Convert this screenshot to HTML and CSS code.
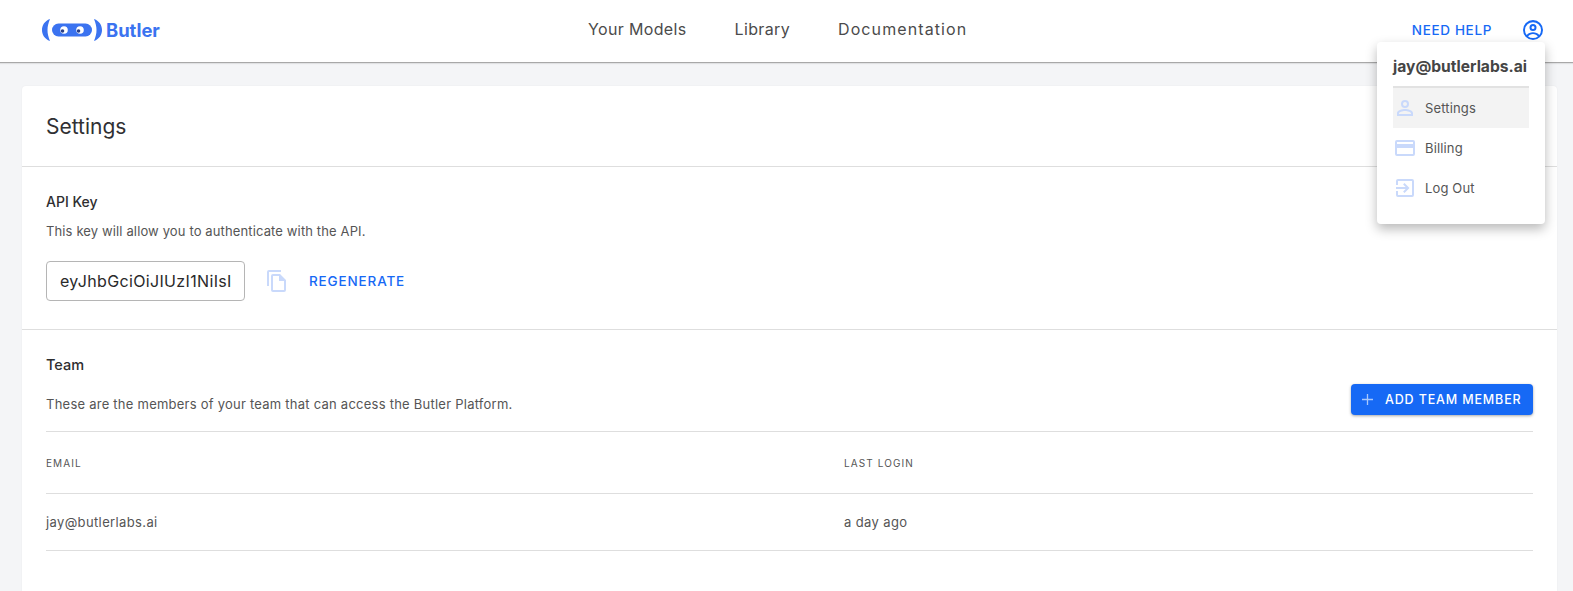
FILE: index.html
```html
<!DOCTYPE html>
<html lang="en">
<head>
<meta charset="utf-8">
<title>Butler - Settings</title>
<link rel="stylesheet" href="styles.css">
</head>
<body>
<header class="nav">
  <a class="logo">
    <svg class="logo-mark" width="60" height="22" viewBox="0 0 60 22">
      <path d="M8 0C2.500 2 0 6.500 0 11s2.500 9 8 11C6.300 18 5.500 14.500 5.500 11S6.300 4 8 0Z" fill="#3b73f0"/>
      <path d="M52 0c5.500 2 8 6.500 8 11s-2.500 9-8 11c1.700-4 2.500-7.500 2.500-11S53.700 4 52 0Z" fill="#3b73f0"/>
      <rect x="10" y="4.500" width="40" height="13" rx="6.500" fill="#3b73f0"/>
      <circle cx="22" cy="11" r="3.800" fill="#fff"/>
      <circle cx="38" cy="11" r="3.800" fill="#fff"/>
      <circle cx="20.500" cy="12" r="1.800" fill="#2a3f86"/>
      <circle cx="36.500" cy="12" r="1.800" fill="#2a3f86"/>
    </svg>
    <span class="logo-text">Butler</span>
  </a>
  <nav class="nav-links">
    <a>Your Models</a>
    <a>Library</a>
    <a class="doc-link">Documentation</a>
  </nav>
  <div class="nav-right">
    <a class="need-help">NEED HELP</a>
    <svg class="account" width="24" height="24" viewBox="0 0 24 24" fill="#1669f5">
      <path d="M12 2a10 10 0 1 0 0 20 10 10 0 0 0 0-20ZM7.100 18.500c.9-1.400 2.900-2.400 4.900-2.400s4 1 4.900 2.400A8 8 0 0 1 12 20a8 8 0 0 1-4.900-1.500Zm11.200-1.400C16.900 15.300 14.400 14.300 12 14.300s-4.900 1-6.300 2.800a8 8 0 1 1 12.600 0ZM12 6a3.500 3.500 0 1 0 0 7 3.500 3.500 0 0 0 0-7Zm0 5a1.500 1.500 0 1 1 0-3 1.500 1.500 0 0 1 0 3Z"/>
    </svg>
  </div>
</header>

<main class="page">
  <section class="card">
    <h1 class="card-title">Settings</h1>

    <div class="section api">
      <h2 class="section-title">API Key</h2>
      <p class="desc">This key will allow you to authenticate with the API.</p>
      <div class="key-row">
        <div class="key-box"><span class="key-text">eyJhbGciOiJIUzI1NiIsI</span></div>
        <svg class="copy" width="24" height="24" viewBox="0 0 24 24" fill="#c9d9fb">
          <path d="M16 1H4a2 2 0 0 0-2 2v14h2V3h12V1Zm-1 4H8a2 2 0 0 0-2 2v14a2 2 0 0 0 2 2h11a2 2 0 0 0 2-2V11l-6-6Zm-7 16V7h6v5h5v9H8Z"/>
        </svg>
        <a class="regen">REGENERATE</a>
      </div>
    </div>

    <div class="section team">
      <h2 class="section-title">Team</h2>
      <div class="team-bar">
        <p class="desc">These are the members of your team that can access the Butler Platform.</p>
        <button class="add-btn">
          <svg class="plus" width="11" height="11" viewBox="0 0 11 11" stroke="#a9c8fb" stroke-width="1.300" fill="none"><path d="M5.500 0v11M0 5.500h11"/></svg>
          ADD TEAM MEMBER
        </button>
      </div>
      <table class="members">
        <thead>
          <tr><th class="col-email">EMAIL</th><th>LAST LOGIN</th></tr>
        </thead>
        <tbody>
          <tr><td>jay@butlerlabs.ai</td><td>a day ago</td></tr>
        </tbody>
      </table>
    </div>
  </section>
</main>

<div class="menu">
  <div class="menu-head">jay@butlerlabs.ai</div>
  <a class="menu-item active">
    <svg class="menu-icon" width="24" height="24" viewBox="0 0 24 24" fill="#c9d9fb">
      <path d="M12 4a4 4 0 1 0 0 8 4 4 0 0 0 0-8Zm0 6a2 2 0 1 1 0-4 2 2 0 0 1 0 4Zm0 3c-2.700 0-8 1.300-8 4v3h16v-3c0-2.700-5.300-4-8-4Zm6 5H6v-1c.2-.7 3.300-2 6-2s5.800 1.300 6 2v1Z"/>
    </svg>
    <span>Settings</span>
  </a>
  <a class="menu-item">
    <svg class="menu-icon" width="24" height="24" viewBox="0 0 24 24" fill="#c9d9fb">
      <path d="M20 4H4a2 2 0 0 0-2 2v12a2 2 0 0 0 2 2h16a2 2 0 0 0 2-2V6a2 2 0 0 0-2-2Zm0 14H4v-6h16v6Zm0-10H4V6h16v2Z"/>
    </svg>
    <span>Billing</span>
  </a>
  <a class="menu-item">
    <svg class="menu-icon" width="24" height="24" viewBox="0 0 24 24" fill="#c9d9fb">
      <path d="M10.100 15.600 11.500 17l5-5-5-5-1.400 1.400 2.600 2.600H3v2h9.700l-2.600 2.600ZM19 3H5a2 2 0 0 0-2 2v4h2V5h14v14H5v-4H3v4a2 2 0 0 0 2 2h14a2 2 0 0 0 2-2V5a2 2 0 0 0-2-2Z"/>
    </svg>
    <span>Log Out</span>
  </a>
</div>
</body>
</html>
```

FILE: styles.css
```css
* { box-sizing: border-box; }
html, body { margin: 0; height: 100%; overflow: hidden; }
body {
  background: #f4f5f7;
  color: #3f3f46;
  font-family: "Inter", "Liberation Sans", sans-serif;
  position: relative;
}
.nav {
  height: 63px;
  background: #fff;
  border-bottom: 1px solid #a8a8a8;
  box-shadow: 0 1px 1px rgba(0,0,0,.08);
  display: flex;
  align-items: center;
  position: relative;
  padding: 0 28px 2px 42px;
}
.logo { display: flex; align-items: center; gap: 4px; }
.logo-text {
  font-weight: 700;
  font-size: 18.400px;
  color: #3b73f0;
}
.nav-links {
  position: absolute;
  left: 588px;
  top: 0;
  height: 58px;
  display: flex;
  align-items: center;
  gap: 48px;
}
.nav-links a { font-size: 16px; letter-spacing: 0.35px; color: #4b4b4b; }
.nav-links .doc-link { letter-spacing: 1.100px; }
.nav-right { margin-left: auto; display: flex; align-items: center; gap: 29px; }
.need-help { color: #1669f5; font-size: 13.500px; font-weight: 500; letter-spacing: .65px; }
.page { padding: 23px 16px 0 22px; }
.card {
  background: #fff;
  border-radius: 4px;
  height: 520px;
  box-shadow: 0 0 2px rgba(0,0,0,.06);
}
.card-title {
  margin: 0;
  height: 81px;
  padding: 0 24px;
  display: flex;
  align-items: center;
  font-size: 21px;
  font-weight: 400;
  color: #303033;
  border-bottom: 1px solid #dedede;
}
.section { padding: 0 24px; }
.api { height: 163px; padding-top: 26px; border-bottom: 1px solid #dedede; }
.section-title { margin: 0; font-size: 14px; font-weight: 500; line-height: 18px; color: #2e2e30; }
.team .section-title { font-size: 14.500px; }
.desc { margin: 0; font-size: 13px; line-height: 18px; color: #555; }
.api .desc { margin-top: 11px; letter-spacing: .13px; }
.team .desc { letter-spacing: .24px; padding-top: 9px; }
.key-row { display: flex; align-items: center; margin-top: 21px; }
.key-box {
  width: 199px;
  height: 40px;
  border: 1px solid #b5b5b5;
  border-radius: 4px;
  padding: 0 12px 0 13px;
  display: flex;
  align-items: center;
  overflow: hidden;
  font-size: 16px;
  letter-spacing: .35px;
  color: #2a2a2a;
}
.key-text { white-space: nowrap; overflow: hidden; }
.copy { margin-left: 20px; }
.regen { margin-left: 20px; color: #1669f5; font-size: 13.500px; font-weight: 500; letter-spacing: .85px; }
.team { padding-top: 26px; }
.team-bar { display: flex; align-items: center; justify-content: space-between; margin-top: 10px; }
.add-btn {
  width: 182px;
  height: 31px;
  border: 0;
  border-radius: 4px;
  background: #1669f5;
  color: #fff;
  font-family: inherit;
  font-size: 12.500px;
  font-weight: 500;
  letter-spacing: .85px;
  display: flex;
  align-items: center;
  gap: 12px;
  padding: 0 0 0 11px;
  box-shadow: 0 1px 3px rgba(0,0,0,.35);
}
.plus { flex: none; }
.members { width: 100%; border-collapse: collapse; margin-top: 16px; table-layout: fixed; }
.members th, .members td { text-align: left; padding: 0; font-size: 13px; font-weight: 400; color: #555; }
.members td { letter-spacing: .37px; }
.members th { height: 62px; font-size: 10px; letter-spacing: 1.100px; border-top: 1px solid #dedede; border-bottom: 1px solid #dedede; }
.members td { height: 57px; border-bottom: 1px solid #dedede; }
.col-email { width: 798px; }
.menu {
  position: absolute;
  left: 1377px;
  top: 42px;
  width: 168px;
  height: 182px;
  background: #fff;
  border-radius: 4px;
  padding: 0 16px;
  box-shadow: 0 5px 12px rgba(0,0,0,.28);
}
.menu-head {
  height: 46px;
  border-bottom: 2px solid #e2e2e2;
  font-weight: 700;
  font-size: 15.600px;
  color: #454545;
  display: flex;
  align-items: center;
  padding-top: 5px;
  white-space: nowrap;
}
.menu-item {
  height: 40px;
  display: flex;
  align-items: center;
  font-size: 13px;
  color: #555;
  letter-spacing: .15px;
  padding-bottom: 1px;
}
.menu-item.active { background: #f3f3f3; }
.menu-icon { margin-right: 8px; flex: none; }
```
